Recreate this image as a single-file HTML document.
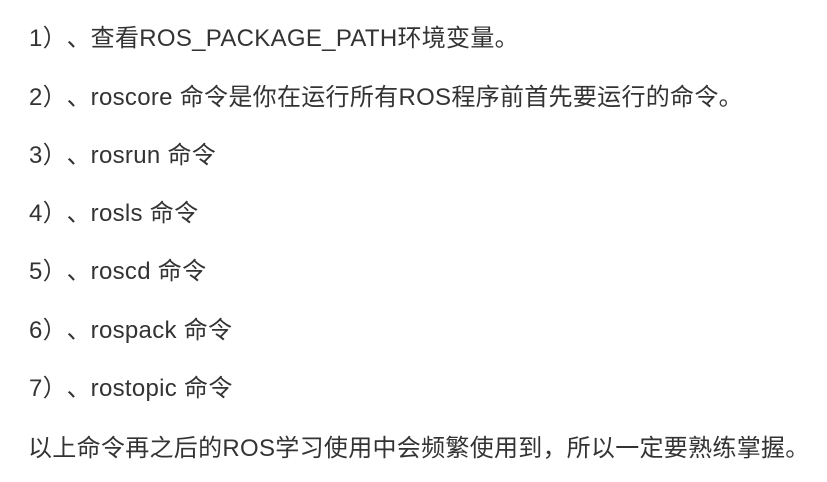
<!DOCTYPE html>
<html><head><meta charset="utf-8"><style>
body{margin:0;width:827px;height:482px;background:#fff;overflow:hidden;}
p{position:absolute;left:29px;margin:0;font:24px/30px "Liberation Sans","Noto Sans CJK SC",sans-serif;color:#333;white-space:nowrap;letter-spacing:0.3px;}
.f{display:inline-block;width:24px;font-family:"Noto Sans CJK SC",sans-serif;}
.r{display:inline-block;width:24px;text-align:center;font-family:"Noto Sans CJK SC",sans-serif;}
</style></head><body>
<p style="top:21px">1<span class="r">）</span><span class="f">、</span>查看ROS_PACKAGE_PATH环境变量。</p>
<p style="top:80px">2<span class="r">）</span><span class="f">、</span>roscore 命令是你在运行所有ROS程序前首先要运行的命令。</p>
<p style="top:138px">3<span class="r">）</span><span class="f">、</span>rosrun 命令</p>
<p style="top:196px">4<span class="r">）</span><span class="f">、</span>rosls 命令</p>
<p style="top:254px">5<span class="r">）</span><span class="f">、</span>roscd 命令</p>
<p style="top:313px">6<span class="r">）</span><span class="f">、</span>rospack 命令</p>
<p style="top:371px">7<span class="r">）</span><span class="f">、</span>rostopic 命令</p>
<p style="top:431px;left:28px">以上命令再之后的ROS学习使用中会频繁使用到<span class="f">，</span>所以一定要熟练掌握。</p>
</body></html>
